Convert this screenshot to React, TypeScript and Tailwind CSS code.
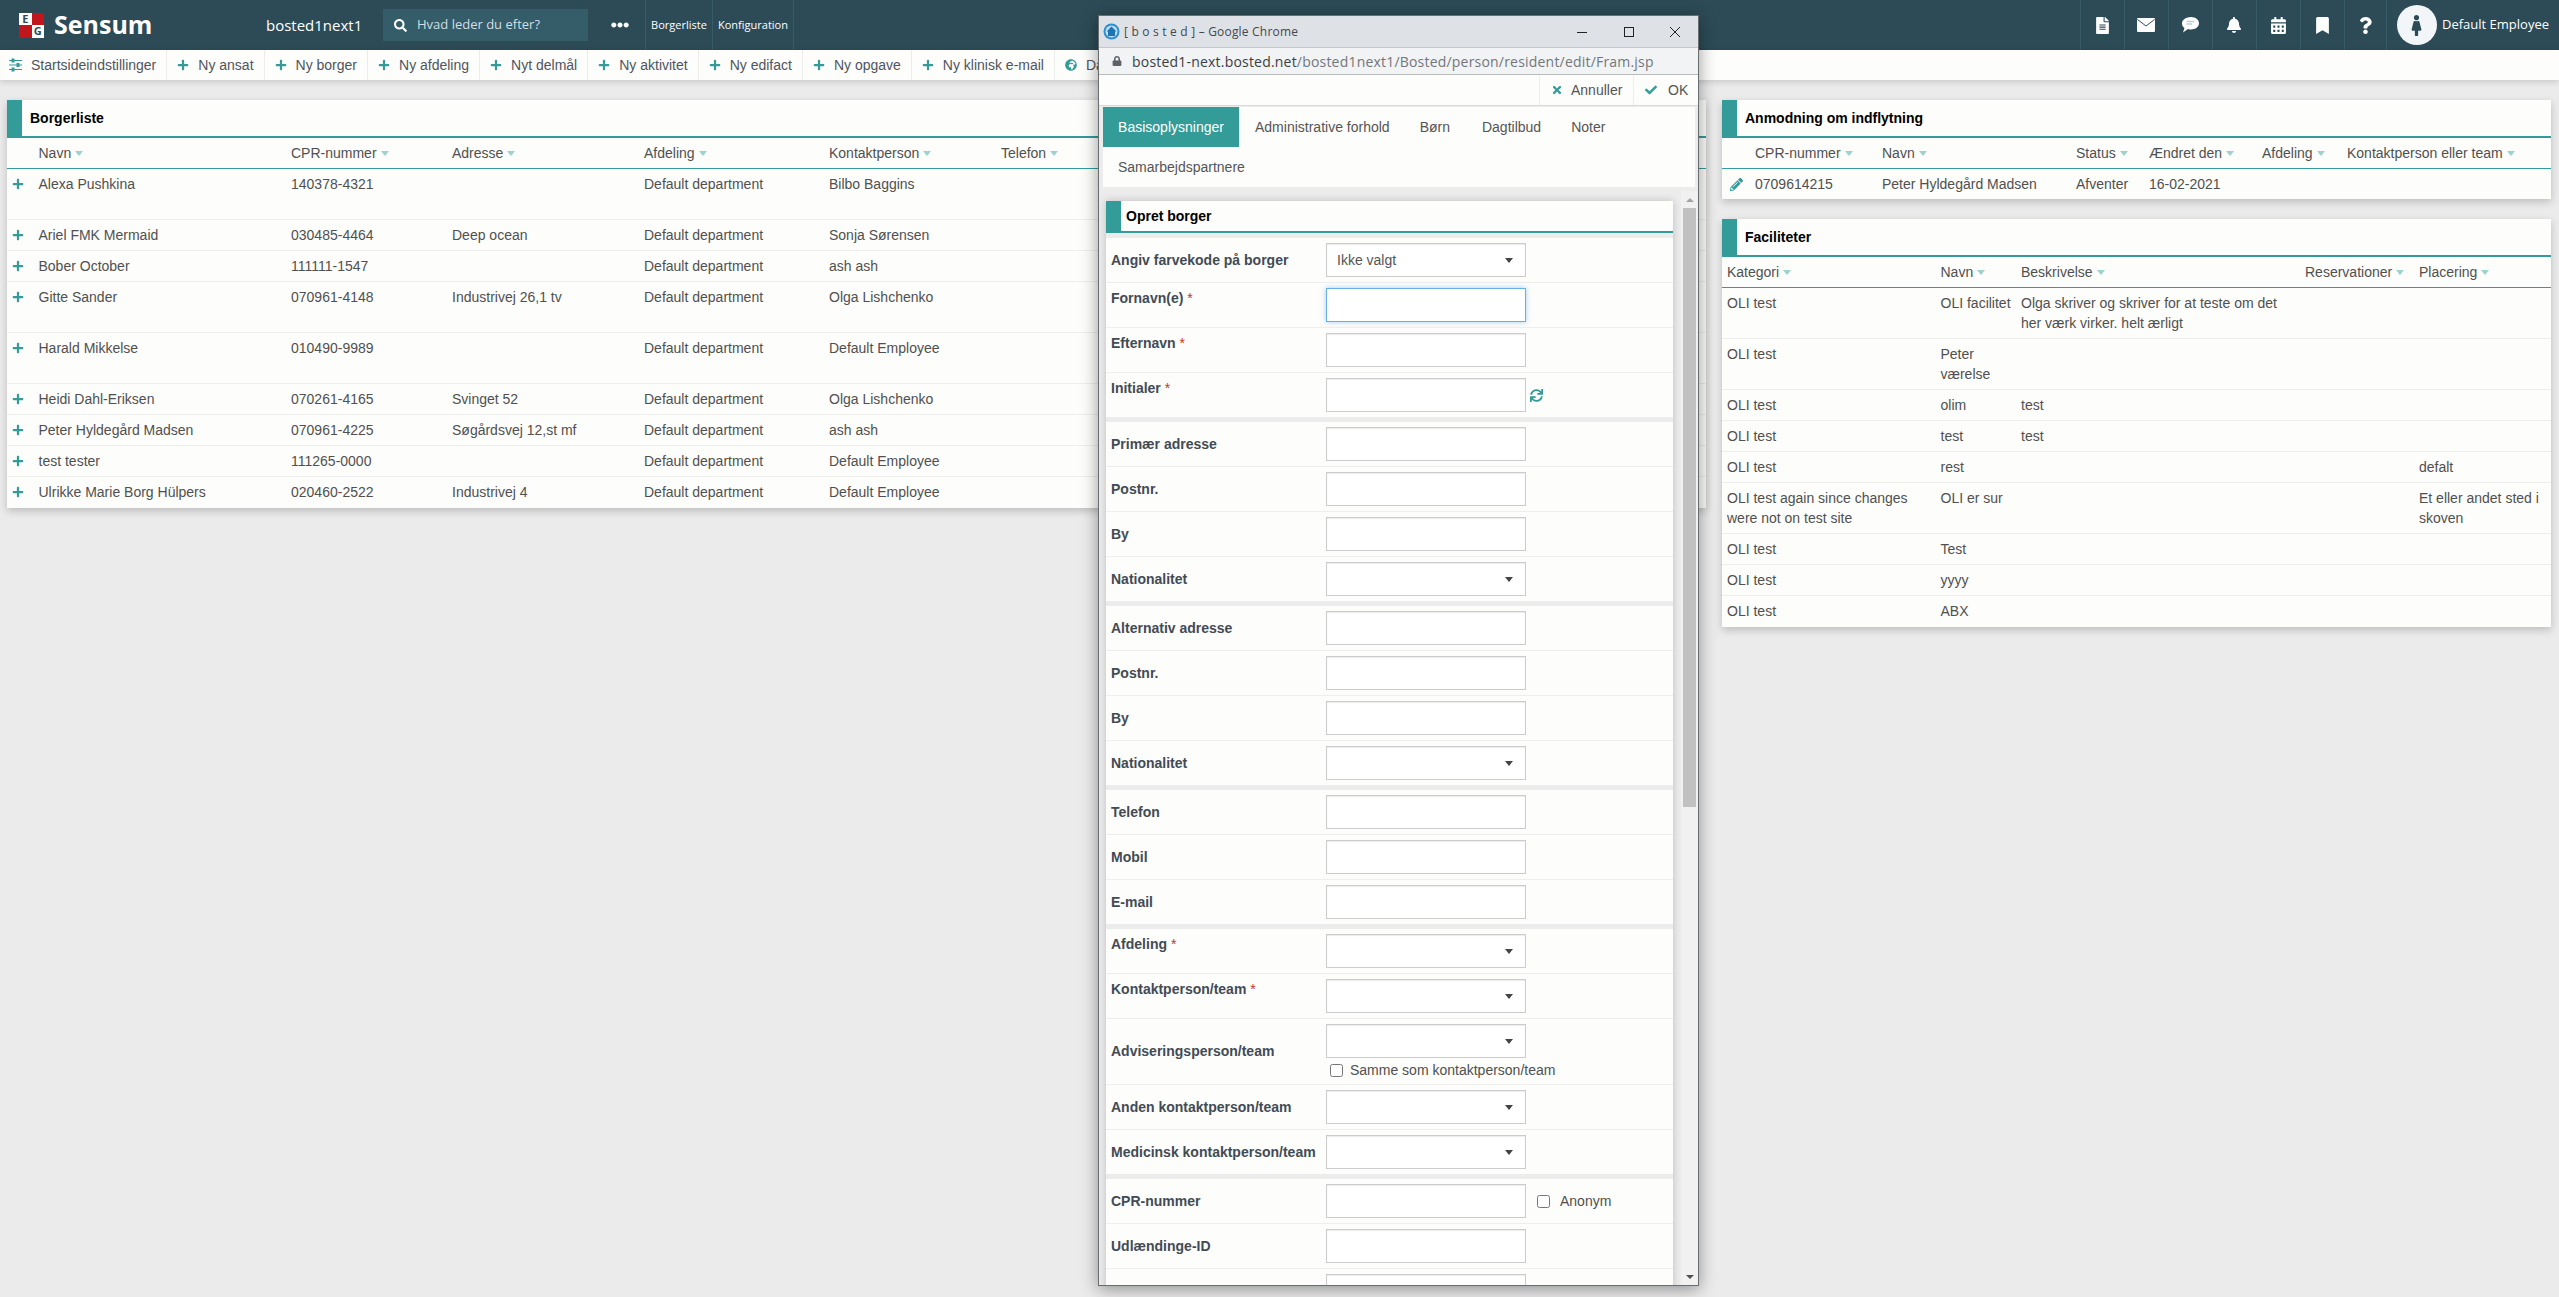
import React from 'react';
import {
  FaBell,
  FaBookmark,
  FaCalendarAlt,
  FaCheck,
  FaEllipsisH,
  FaFemale,
  FaFileAlt,
  FaGlobeAfrica,
  FaLock,
  FaPencilAlt,
  FaPlus,
  FaQuestion,
  FaSearch,
  FaSync,
  FaTimes,
} from 'react-icons/fa';

const toolbarItems = ['Ny ansat', 'Ny borger', 'Ny afdeling', 'Nyt delmål', 'Ny aktivitet', 'Ny edifact', 'Ny opgave', 'Ny klinisk e-mail'];

const residents = [
  { name: 'Alexa Pushkina', cpr: '140378-4321', address: '', contact: 'Bilbo Baggins', tall: true },
  { name: 'Ariel FMK Mermaid', cpr: '030485-4464', address: 'Deep ocean', contact: 'Sonja Sørensen' },
  { name: 'Bober October', cpr: '111111-1547', address: '', contact: 'ash ash' },
  { name: 'Gitte Sander', cpr: '070961-4148', address: 'Industrivej 26,1 tv', contact: 'Olga Lishchenko', tall: true },
  { name: 'Harald Mikkelse', cpr: '010490-9989', address: '', contact: 'Default Employee', tall: true },
  { name: 'Heidi Dahl-Eriksen', cpr: '070261-4165', address: 'Svinget 52', contact: 'Olga Lishchenko' },
  { name: 'Peter Hyldegård Madsen', cpr: '070961-4225', address: 'Søgårdsvej 12,st mf', contact: 'ash ash' },
  { name: 'test tester', cpr: '111265-0000', address: '', contact: 'Default Employee' },
  { name: 'Ulrikke Marie Borg Hülpers', cpr: '020460-2522', address: 'Industrivej 4', contact: 'Default Employee' },
];

const facilities = [
  ['OLI test', 'OLI facilitet', 'Olga skriver og skriver for at teste om det her værk virker. helt ærligt', '', ''],
  ['OLI test', 'Peter værelse', '', '', ''],
  ['OLI test', 'olim', 'test', '', ''],
  ['OLI test', 'test', 'test', '', ''],
  ['OLI test', 'rest', '', '', 'defalt'],
  ['OLI test again since changes were not on test site', 'OLI er sur', '', '', 'Et eller andet sted i skoven'],
  ['OLI test', 'Test', '', '', ''],
  ['OLI test', 'yyyy', '', '', ''],
  ['OLI test', 'ABX', '', '', ''],
];

const Arrow = () => (
  <span className="ml-[4px] inline-block w-0 h-0 border-x-[4px] border-t-[5px] border-x-transparent border-t-[#9dd2cf] align-middle" />
);

const Head = ({ label }: { label: string }) => (
  <div className="flex items-center whitespace-nowrap">
    {label}
    <Arrow />
  </div>
);

const Panel = ({ title, className, children }: { title: string; className: string; children: React.ReactNode }) => (
  <section className={`bg-[#fdfdfb] shadow-[0_3px_8px_rgba(0,0,0,0.2)] ${className}`}>
    <div className="flex h-[38px] border-b-2 border-[#339b98]">
      <div className="w-[15px] bg-[#339b98]" />
      <h2 className="pl-[8px] leading-[36px] text-[14px] font-bold text-black">{title}</h2>
    </div>
    {children}
  </section>
);

const Box = ({ select, value, focused }: { select?: boolean; value?: string; focused?: boolean }) => (
  <div
    className={`flex h-[34px] w-[200px] items-center justify-between bg-white pl-[10px] pr-[12px] text-[14px] text-[#555] border ${
      focused ? 'border-[#66afe9] shadow-[0_0_5px_rgba(102,175,233,0.6)]' : 'border-[#cccccc] shadow-[inset_0_1px_1px_rgba(0,0,0,0.08)]'
    }`}
  >
    <span>{value}</span>
    {select && <span className="w-0 h-0 border-x-[4px] border-t-[5px] border-x-transparent border-t-[#444]" />}
  </div>
);

const Field = ({
  label,
  required,
  select,
  value,
  focused,
  last,
  children,
}: {
  label: string;
  required?: boolean;
  select?: boolean;
  value?: string;
  focused?: boolean;
  last?: boolean;
  children?: React.ReactNode;
}) => (
  <div className={`flex ${required ? 'items-start' : 'items-center'} ${last ? 'h-[44px]' : 'h-[45px] border-b border-[#eeeeec]'}`}>
    <label className={`w-[220px] pl-[5px] text-[14px] font-bold text-[#424b55] whitespace-nowrap ${required ? 'pt-[5px] leading-[20px]' : ''}`}>
      {label}
      {required && <span className="ml-[4px] font-normal text-[#c9302c]">*</span>}
    </label>
    <div className={`flex items-center ${required ? 'mt-[5px]' : ''}`}>
      <Box select={select} value={value} focused={focused} />
      {children}
    </div>
  </div>
);

const Gap = () => <div className="h-[5px] bg-[#ececec]" />;

const App: React.FC = () => {
  return (
    <div className="relative h-[1297px] w-[2559px] overflow-hidden bg-[#ebebeb] [font-family:'Liberation_Sans',Arial,sans-serif] text-[14px] text-[#505050]">
      {/* top bar */}
      <header className="flex h-[50px] items-center bg-[#2c4b57] text-white [font-family:'Open_Sans',sans-serif]">
        <div className="ml-[19px] grid h-[25px] w-[25px] grid-cols-2 grid-rows-2 text-[11px] font-bold leading-[12px] text-[#2c4b57]">
          <span className="bg-white text-center">E</span>
          <span className="bg-[#c1161c]" />
          <span className="bg-[#c1161c]" />
          <span className="bg-white text-center">G</span>
        </div>
        <span className="ml-[10px] w-[212px] text-[25px] font-bold">Sensum</span>
        <span className="w-[117px] text-[15px]">bosted1next1</span>
        <div className="flex h-[32px] w-[205px] items-center bg-[#345c69] pl-[11px] text-[13px] text-[#d5dfe3]">
          <FaSearch size={13} className="text-white" />
          <span className="ml-[10px]">Hvad leder du efter?</span>
        </div>
        <div className="flex w-[57px] justify-center pl-[6px]">
          <FaEllipsisH size={18} />
        </div>
        <nav className="flex h-full items-center text-[11px] font-medium">
          <div className="flex h-full w-[68px] items-center justify-center border-x border-[#3a5a66]">Borgerliste</div>
          <div className="flex h-full w-[81px] items-center justify-center border-r border-[#3a5a66]">Konfiguration</div>
        </nav>
        <div className="ml-auto flex h-full items-center">
          <div className="flex h-full w-[44px] items-center justify-center border-l border-[#3a5a66]">
            <FaFileAlt size={17} />
          </div>
          <div className="flex h-full w-[44px] items-center justify-center border-l border-[#3a5a66]">
            <svg width="18" height="14" viewBox="0 0 18 14">
              <rect width="18" height="14" rx="1" fill="#fff" />
              <path d="M0.5 1.5 L9 8 L17.5 1.5" fill="none" stroke="#2c4b57" strokeWidth="1" />
            </svg>
          </div>
          <div className="flex h-full w-[44px] items-center justify-center border-l border-[#3a5a66]">
            <svg width="18" height="16" viewBox="0 0 18 16">
              <path d="M10 0 C14.5 0 18 2.8 18 6.3 C18 9.8 14.5 12.5 10 12.5 C9 12.5 8 12.4 7 12 L2 15.5 L3.5 11 C1.5 9.8 1 8 1 6.3 C1 2.8 5.5 0 10 0 Z" fill="#fff" />
              <path d="M5.5 4.5 H13.5 M5.5 7 H11" stroke="#c3ced3" strokeWidth="1.4" />
            </svg>
          </div>
          <div className="flex h-full w-[44px] items-center justify-center border-l border-[#3a5a66]">
            <FaBell size={16} />
          </div>
          <div className="flex h-full w-[44px] items-center justify-center border-l border-[#3a5a66]">
            <FaCalendarAlt size={17} />
          </div>
          <div className="flex h-full w-[44px] items-center justify-center border-l border-[#3a5a66]">
            <FaBookmark size={17} />
          </div>
          <div className="flex h-full w-[43px] items-center justify-center border-x border-[#3a5a66]">
            <FaQuestion size={17} />
          </div>
          <div className="ml-[10px] flex h-[40px] w-[40px] items-center justify-center rounded-full bg-[#f3f6f8] text-[#2c4b57]">
            <FaFemale size={21} />
          </div>
          <span className="ml-[5px] mr-[10px] text-[13px]">Default Employee</span>
        </div>
      </header>

      {/* toolbar */}
      <div className="relative flex h-[30px] items-center bg-[#fdfdfb] text-[14px] text-[#4f5560] shadow-[0_2px_6px_rgba(0,0,0,0.15)]">
        <div className="flex h-full items-center border-r border-[#ececec] pl-[9px] pr-[10px]">
          <svg width="13" height="14" viewBox="0 0 13 14" stroke="#339b98" strokeWidth="1" fill="#339b98">
            <path d="M0 2.5 H13 M0 7 H13 M0 11.5 H13" />
            <rect x="3" y="1" width="2" height="3" />
            <rect x="8" y="5.5" width="2" height="3" />
            <rect x="3" y="10" width="2" height="3" />
          </svg>
          <span className="ml-[9px]">Startsideindstillinger</span>
        </div>
        {toolbarItems.map(item => (
          <div key={item} className="flex h-full items-center border-r border-[#ececec] pl-[10px] pr-[10px]">
            <FaPlus size={12} className="text-[#339b98]" />
            <span className="ml-[9px] whitespace-nowrap">{item}</span>
          </div>
        ))}
        <div className="flex h-full items-center pl-[10px]">
          <FaGlobeAfrica size={12} className="text-[#339b98]" />
          <span className="ml-[9px]">Dagbog</span>
        </div>
      </div>

      {/* page panels */}
      <main className="flex items-start pl-[7px] pr-[8px] pt-[20px]">
        <Panel title="Borgerliste" className="w-[1699px]">
          <div className="grid h-[31px] grid-cols-[31.5px_252.5px_161px_192px_185px_172px_1fr] items-center border-b border-[#339b98]">
            <div />
            <Head label="Navn" />
            <Head label="CPR-nummer" />
            <Head label="Adresse" />
            <Head label="Afdeling" />
            <Head label="Kontaktperson" />
            <Head label="Telefon" />
          </div>
          {residents.map((r, i) => (
            <div
              key={r.cpr}
              className={`grid grid-cols-[31.5px_252.5px_161px_192px_185px_172px_1fr] pt-[5px] leading-[20px] ${r.tall ? 'h-[51px]' : 'h-[31px]'} ${
                i < residents.length - 1 ? 'border-b border-[#eeeeec]' : ''
              }`}
            >
              <div className="flex h-[20px] items-center pl-[5px]">
                <FaPlus size={12} className="text-[#339b98]" />
              </div>
              <div>{r.name}</div>
              <div>{r.cpr}</div>
              <div>{r.address}</div>
              <div>Default department</div>
              <div>{r.contact}</div>
              <div />
            </div>
          ))}
        </Panel>

        <div className="ml-[16px] flex w-[829px] flex-col gap-[20px]">
          <Panel title="Anmodning om indflytning" className="w-full">
            <div className="grid h-[31px] grid-cols-[33px_127px_194px_73px_113px_85px_1fr] items-center border-b border-[#339b98]">
              <div />
              <Head label="CPR-nummer" />
              <Head label="Navn" />
              <Head label="Status" />
              <Head label="Ændret den" />
              <Head label="Afdeling" />
              <Head label="Kontaktperson eller team" />
            </div>
            <div className="grid h-[30px] grid-cols-[33px_127px_194px_73px_113px_85px_1fr] pt-[5px] leading-[20px]">
              <div className="flex h-[20px] items-center pl-[8px]">
                <FaPencilAlt size={13} className="text-[#339b98]" />
              </div>
              <div>0709614215</div>
              <div>Peter Hyldegård Madsen</div>
              <div>Afventer</div>
              <div>16-02-2021</div>
            </div>
          </Panel>

          <Panel title="Faciliteter" className="w-full">
            <div className="grid h-[31px] grid-cols-[213.5px_80.5px_284px_114px_1fr] items-center border-b border-[#339b98] pl-[5px]">
              <Head label="Kategori" />
              <Head label="Navn" />
              <Head label="Beskrivelse" />
              <Head label="Reservationer" />
              <Head label="Placering" />
            </div>
            {facilities.map((row, i) => (
              <div
                key={i}
                className={`grid grid-cols-[213.5px_80.5px_284px_114px_1fr] pl-[5px] pt-[5px] leading-[20px] ${i === 0 || i === 1 || i === 5 ? 'h-[51px]' : 'h-[31px]'} ${
                  i < facilities.length - 1 ? 'border-b border-[#eeeeec]' : ''
                }`}
              >
                {row.map((cell, j) => (
                  <div key={j} className="pr-[8px]">
                    {cell}
                  </div>
                ))}
              </div>
            ))}
          </Panel>
        </div>
      </main>

      {/* popup window */}
      <div className="absolute left-[1098px] top-[15px] flex h-[1271px] w-[601px] flex-col overflow-hidden border border-[#6a6d70] bg-[#ececec] shadow-[0_3px_16px_rgba(0,0,0,0.4)]">
        <div className="flex h-[31px] shrink-0 items-center bg-[#dee1e6] pl-[4px] text-[12px] tracking-[0.2px] text-[#45484c] [font-family:'Open_Sans',sans-serif]">
          <svg width="17" height="17" viewBox="0 0 17 17">
            <circle cx="8.5" cy="8.5" r="8" fill="#2d8fd2" />
            <circle cx="8.5" cy="8.5" r="6" fill="#bfe0f4" />
            <path d="M8.5 3.5 L13.5 8.5 H12 V13 H5 V8.5 H3.5 Z" fill="#1d74b5" />
          </svg>
          <span className="ml-[4px] whitespace-nowrap">[ b o s t e d ] – Google Chrome</span>
          <div className="ml-auto flex items-center">
            <svg width="10" height="10" viewBox="0 0 10 10" className="mr-[37px]">
              <path d="M0 5.5 H10" stroke="#222" />
            </svg>
            <svg width="10" height="10" viewBox="0 0 10 10" className="mr-[36px]">
              <rect x="0.5" y="0.5" width="9" height="9" fill="none" stroke="#222" />
            </svg>
            <svg width="10" height="10" viewBox="0 0 10 10" className="mr-[18px]">
              <path d="M0 0 L10 10 M10 0 L0 10" stroke="#222" />
            </svg>
          </div>
        </div>
        <div className="flex h-[28px] shrink-0 items-center border-y border-[#b9bbbe] border-t-[#c5c7ca] bg-[#f1f3f4] pl-[13px] text-[14px] tracking-[0.2px] [font-family:'Open_Sans',sans-serif]">
          <FaLock size={10} className="text-[#5f6368]" />
          <span className="ml-[10px] whitespace-nowrap text-[#3c4043]">
            bosted1-next.bosted.net<span className="text-[#73777c]">/bosted1next1/Bosted/person/resident/edit/Fram.jsp</span>
          </span>
        </div>
        <div className="flex h-[31px] shrink-0 justify-end border-b border-[#d9d9d9] bg-[#fdfdfb] text-[14px] text-[#555]">
          <div className="flex w-[94px] items-center border-l border-[#eeeeec] pl-[11px]">
            <FaTimes size={12} className="text-[#339b98]" />
            <span className="ml-[8px]">Annuller</span>
          </div>
          <div className="flex w-[65px] items-center border-l border-[#eeeeec] pl-[11px]">
            <FaCheck size={12} className="text-[#339b98]" />
            <span className="ml-[11px]">OK</span>
          </div>
        </div>
        <div className="ml-[4px] mt-[1px] h-[80px] w-[592px] shrink-0 bg-[#fdfdfb] text-[14px] text-[#555]">
          <div className="flex h-[40px] items-center">
            <div className="flex h-full w-[136px] items-center justify-center bg-[#339b98] text-white">Basisoplysninger</div>
            <span className="ml-[16px]">Administrative forhold</span>
            <span className="ml-[30px]">Børn</span>
            <span className="ml-[32px]">Dagtilbud</span>
            <span className="ml-[30px]">Noter</span>
          </div>
          <div className="flex h-[40px] items-center pl-[15px]">Samarbejdspartnere</div>
        </div>

        <div className="mt-[4px] flex min-h-0 flex-1">
          <div className="min-w-0 flex-1 overflow-hidden pl-[7px] pr-[8px] pt-[10px]">
            <div className="bg-[#fdfdfb] shadow-[0_0_8px_rgba(0,0,0,0.2)]">
              <div className="flex h-[32px] border-b-2 border-[#339b98]">
                <div className="w-[15px] bg-[#339b98]" />
                <h2 className="pl-[5px] leading-[30px] text-[14px] font-bold text-black">Opret borger</h2>
              </div>
              <div className="h-[5px] bg-[#ececec]" />
              <Field label="Angiv farvekode på borger" select value="Ikke valgt" />
              <Field label="Fornavn(e)" required focused />
              <Field label="Efternavn" required />
              <Field label="Initialer" required last>
                <FaSync size={13} className="ml-[4px] text-[#339b98]" />
              </Field>
              <Gap />
              <Field label="Primær adresse" />
              <Field label="Postnr." />
              <Field label="By" />
              <Field label="Nationalitet" select last />
              <Gap />
              <Field label="Alternativ adresse" />
              <Field label="Postnr." />
              <Field label="By" />
              <Field label="Nationalitet" select last />
              <Gap />
              <Field label="Telefon" />
              <Field label="Mobil" />
              <Field label="E-mail" last />
              <Gap />
              <Field label="Afdeling" required select />
              <Field label="Kontaktperson/team" required select />
              <div className="flex h-[66px] items-center border-b border-[#eeeeec]">
                <label className="w-[220px] pl-[5px] text-[14px] font-bold text-[#424b55]">Adviseringsperson/team</label>
                <div>
                  <Box select />
                  <div className="mt-[4px] flex h-[17px] items-center whitespace-nowrap pl-[4px] leading-[17px]">
                    <input type="checkbox" readOnly className="h-[13px] w-[13px]" />
                    <span className="ml-[7px]">Samme som kontaktperson/team</span>
                  </div>
                </div>
              </div>
              <Field label="Anden kontaktperson/team" select />
              <Field label="Medicinsk kontaktperson/team" select last />
              <Gap />
              <Field label="CPR-nummer">
                <input type="checkbox" readOnly className="ml-[11px] h-[13px] w-[13px]" />
                <span className="ml-[10px]">Anonym</span>
              </Field>
              <Field label="Udlændinge-ID" />
              <Field label="" />
            </div>
          </div>
          <div className="flex w-[17px] shrink-0 flex-col items-center bg-[#f1f1f1]">
            <div className="flex h-[17px] w-full items-center justify-center">
              <span className="w-0 h-0 border-x-[4px] border-b-[4px] border-x-transparent border-b-[#a3a3a3]" />
            </div>
            <div className="h-[599px] w-[13px] bg-[#c1c1c1]" />
            <div className="mt-auto flex h-[17px] w-full items-center justify-center">
              <span className="w-0 h-0 border-x-[4px] border-t-[4px] border-x-transparent border-t-[#505050]" />
            </div>
          </div>
        </div>
      </div>
    </div>
  );
};

export default App;
